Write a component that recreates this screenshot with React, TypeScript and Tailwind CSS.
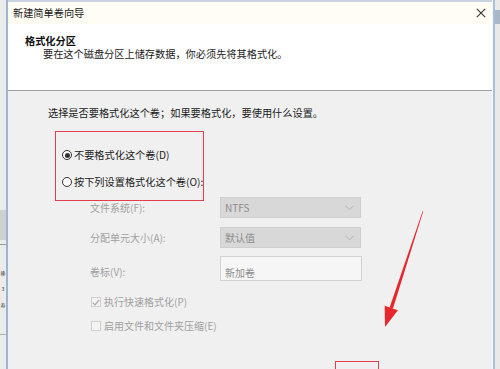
import React from "react";

const font = { fontFamily: '"Noto Sans CJK SC", "Noto Sans", sans-serif' };

function Radio({ checked, label }: { checked?: boolean; label: string }) {
  return (
    <div className="flex items-center h-[14px]">
      <div className="w-[10px] h-[10px] rounded-full border border-[#333] bg-white flex items-center justify-center">
        {checked && <div className="w-[5px] h-[5px] rounded-full bg-[#333]" />}
      </div>
      <span className="ml-[2px] text-[10.2px] leading-[14px] text-[#1a1a1a]">{label}</span>
    </div>
  );
}

function Combo({ value }: { value: string }) {
  return (
    <div className="w-[141px] h-[21px] bg-[#d8d8d8] border border-[#cfcfcf] flex items-center justify-between pl-[4px] pr-[6px]">
      <span className="text-[10px] leading-[14px] text-[#8c8c8c]">{value}</span>
      <svg width="9" height="6" viewBox="0 0 9 6">
        <path d="M0.5 0.8 L4.5 4.8 L8.5 0.8" fill="none" stroke="#b4b4b4" strokeWidth="1" />
      </svg>
    </div>
  );
}

function Check({ checked, label }: { checked?: boolean; label: string }) {
  return (
    <div className="flex items-center h-[14px]">
      <div className="w-[10px] h-[10px] border border-[#cfcfcf] bg-[#f3f3f3] flex items-center justify-center">
        {checked && (
          <svg width="8" height="7" viewBox="0 0 8 7">
            <path d="M0.8 3.6 L3 5.8 L7.2 0.8" fill="none" stroke="#a8a8a8" strokeWidth="1.2" />
          </svg>
        )}
      </div>
      <span className="ml-[3px] text-[10px] leading-[14px] text-[#a0a0a0]">{label}</span>
    </div>
  );
}

export default function App() {
  return (
    <div className="relative w-[500px] h-[369px] overflow-hidden flex bg-[#ececec]" style={font}>
      {/* background window, left edge */}
      <div className="w-[6px] flex flex-col items-center bg-[#ebebeb] text-[5px] leading-[8px] text-[#333]">
        <div className="h-[210px]" />
        <div className="w-full h-[30px] bg-[#d0d0d0]" />
        <div className="w-full h-[5px] border-b border-[#9a9a9a]" />
        <div className="mt-[24px]">移</div>
        <div className="mt-[8px]">3</div>
        <div className="mt-[8px]">寿</div>
        <div className="w-full h-[26px] border-b border-[#b0b0b0]" />
      </div>

      {/* dialog */}
      <div className="w-[487px] flex flex-col border-l-2 border-[#9db4d0] border-r border-r-[#fafafa]">
        <div className="h-[2px] bg-[#c8d3e0]" />
        {/* title bar */}
        <div className="h-[22px] bg-[#fffdf4] flex items-center justify-between pl-[5px] pr-[6px]">
          <span className="text-[10.2px] leading-[14px] text-[#1a1a1a]">新建简单卷向导</span>
          <svg width="10" height="10" viewBox="0 0 10 10">
            <path d="M0.8 0.8 L9.2 9.2 M9.2 0.8 L0.8 9.2" stroke="#333" strokeWidth="1.1" />
          </svg>
        </div>
        {/* header */}
        <div className="h-[66px] bg-white flex flex-col pl-[17px] pt-[11px]">
          <span className="text-[10.2px] leading-[12px] font-bold text-[#111]">格式化分区</span>
          <span className="mt-[1px] ml-[18px] text-[10.2px] leading-[12px] text-[#1a1a1a]">
            要在这个磁盘分区上储存数据，你必须先将其格式化。
          </span>
        </div>
        <div className="h-px bg-[#a0a0a0]" />
        {/* body */}
        <div className="flex-1 bg-[#f0f0f0] flex flex-col pl-[40px]">
          <span className="mt-[15px] text-[10.2px] leading-[14px] text-[#1a1a1a]">
            选择是否要格式化这个卷；如果要格式化，要使用什么设置。
          </span>
          <div className="mt-[28px] ml-[14px] flex flex-col gap-[13px]">
            <Radio checked label="不要格式化这个卷(D)" />
            <Radio label="按下列设置格式化这个卷(O):" />
          </div>
          <div className="mt-[8px] ml-[42px] grid grid-cols-[130px_141px] gap-y-[8px] items-center">
            <span className="text-[10px] leading-[14px] text-[#a0a0a0]">文件系统(F):</span>
            <Combo value="NTFS" />
            <span className="text-[10px] leading-[14px] text-[#a0a0a0] mt-[2px]">分配单元大小(A):</span>
            <div className="mt-[1px]"><Combo value="默认值" /></div>
            <span className="text-[10px] leading-[14px] text-[#a0a0a0] mt-[6px]">卷标(V):</span>
            <div className="w-[142px] h-[25px] bg-[#f6f6f6] border border-[#d2d2d2] pl-[4px] pt-[1px]">
              <span className="text-[10px] leading-[14px] text-[#8c8c8c]">新加卷</span>
            </div>
          </div>
          <div className="mt-[14px] ml-[43px] flex flex-col gap-[10px]">
            <Check checked label="执行快速格式化(P)" />
            <Check label="启用文件和文件夹压缩(E)" />
          </div>
        </div>
      </div>

      {/* background window, right edge */}
      <div className="flex-1 flex flex-col bg-[#e9e9e9] border-l-2 border-[#a7bfdc]">
        <div className="mt-[10px] h-[14px] bg-[#aab7c8]" />
      </div>

      {/* annotations */}
      <div className="absolute left-[55px] top-[131px] w-[149px] h-[70px] border border-[#e0404c]" />
      <div className="absolute left-[335px] top-[361px] w-[44px] h-[12px] border border-[#e0404c]" />
      <svg className="absolute left-0 top-0" width="500" height="369" viewBox="0 0 500 369">
        <polygon points="423.3,211.1 422.7,210.9 389.6,307.4 393,308.6" fill="#e8262b" />
        <polygon points="384.7,305.8 397.9,310.2 385,327" fill="#e8262b" />
      </svg>
    </div>
  );
}
